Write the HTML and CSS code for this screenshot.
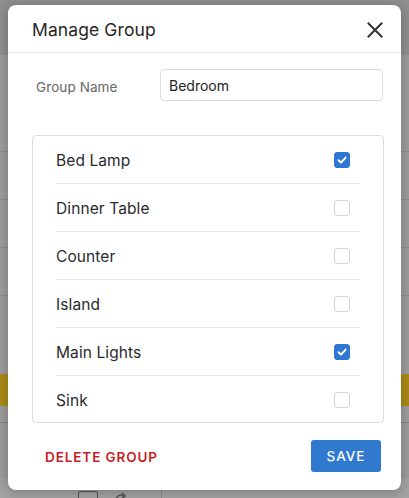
FILE: index.html
```html
<!DOCTYPE html>
<html>
<head>
<meta charset="utf-8">
<title>Manage Group</title>
<link rel="stylesheet" href="styles.css">
</head>
<body>
<div class="page">
  <div class="bg-header"></div>
  <div class="bg-row bg-tall"></div>
  <div class="bg-row"></div>
  <div class="bg-row"></div>
  <div class="bg-row"></div>
  <div class="bg-row bg-mid"></div>
  <div class="bg-yellow"></div>
  <div class="bg-row bg-short"></div>
  <div class="bg-row bg-gap"></div>
  <div class="bg-toolbar">
    <span class="tb-icon tb-kbd"></span>
    <svg class="tb-icon" width="18" height="18" viewBox="0 0 18 18"><path d="M14 9a5 5 0 1 1-2-4" fill="none" stroke="#555" stroke-width="1.6"/><path d="M10 2l3 3-3 2" fill="none" stroke="#555" stroke-width="1.6"/></svg>
    <span class="tb-divider"></span>
  </div>
</div>

<div class="modal">
  <div class="modal-header">
    <h2 class="modal-title">Manage Group</h2>
    <svg class="close" width="16" height="16" viewBox="0 0 16 16"><path d="M1.5 1.5L14.5 14.5M14.5 1.5L1.5 14.5" stroke="#333" stroke-width="2" stroke-linecap="square"/></svg>
  </div>
  <div class="modal-body">
    <div class="field">
      <label class="field-label">Group Name</label>
      <div class="field-input">Bedroom</div>
    </div>
    <div class="list">
      <div class="item"><span>Bed Lamp</span><span class="cb on"><svg width="16" height="16" viewBox="0 0 16 16"><path d="M4.5 8.3L7 10.6L11.6 5.6" fill="none" stroke="#fff" stroke-width="2" stroke-linecap="round" stroke-linejoin="round"/></svg></span></div>
      <div class="item"><span>Dinner Table</span><span class="cb"></span></div>
      <div class="item"><span>Counter</span><span class="cb"></span></div>
      <div class="item"><span>Island</span><span class="cb"></span></div>
      <div class="item"><span>Main Lights</span><span class="cb on"><svg width="16" height="16" viewBox="0 0 16 16"><path d="M4.5 8.3L7 10.6L11.6 5.6" fill="none" stroke="#fff" stroke-width="2" stroke-linecap="round" stroke-linejoin="round"/></svg></span></div>
      <div class="item"><span>Sink</span><span class="cb"></span></div>
    </div>
  </div>
  <div class="modal-footer">
    <button class="btn-delete">DELETE GROUP</button>
    <button class="btn-save">SAVE</button>
  </div>
</div>
</body>
</html>
```

FILE: styles.css
```css
* { box-sizing: border-box; }
html, body { margin: 0; padding: 0; }
body {
  width: 409px;
  height: 498px;
  overflow: hidden;
  position: relative;
  font-family: Inter, "Liberation Sans", sans-serif;
  background: #9c9c9c;
}

.page { display: flex; flex-direction: column; height: 498px; }
.bg-header { height: 55px; background: #8e8e8e; flex: none; }
.bg-row { height: 48px; border-bottom: 1px solid #8a8a8a; flex: none; }
.bg-tall { height: 97px; }
.bg-mid { height: 78px; border-bottom: none; }
.bg-yellow { height: 32px; background: #a98a18; flex: none; }
.bg-short { height: 17px; border-bottom: 1px solid #808080; }
.bg-gap { height: 55px; border-bottom: none; }
.bg-toolbar {
  flex: 1;
  background: #a2a2a2;
  display: flex;
  align-items: flex-start;
  padding: 13px 0 0 78px;
  gap: 14px;
}
.tb-icon { flex: none; }
.tb-kbd { width: 20px; height: 14px; border: 1.6px solid #555; border-radius: 2px; }
.tb-divider { width: 1px; height: 30px; background: #888; margin-left: 17px; margin-top: -13px; }

.modal {
  position: absolute;
  left: 8px;
  top: 5px;
  width: 393px;
  height: 485px;
  background: #fff;
  border-radius: 8px;
  box-shadow: 0 2px 12px rgba(0,0,0,0.25);
  display: flex;
  flex-direction: column;
}

.modal-header {
  height: 48px;
  border-bottom: 1px solid #e6e6e6;
  display: flex;
  align-items: center;
  justify-content: space-between;
  padding: 0 18px 0 24px;
  flex: none;
}
.modal-title {
  margin: 0;
  font-size: 17.5px;
  font-weight: 400;
  color: #262626;
  letter-spacing: 0.1px;
  padding-top: 2px;
}
.close { display: block; margin-top: 2px; }

.modal-body {
  padding: 16px 17px 0 24px;
  flex: none;
}
.field { display: flex; align-items: center; }
.field-label {
  width: 128px;
  padding-left: 4px;
  font-size: 13.5px;
  color: #666;
  padding-top: 3px;
  letter-spacing: 0.1px;
}
.field-input {
  flex: 1;
  height: 32px;
  border: 1px solid #dcdcdc;
  border-radius: 4px;
  padding: 0 8px;
  display: flex;
  align-items: center;
  font-size: 14px;
  color: #222;
  margin-right: 1px;
}

.list {
  margin-top: 34px;
  height: 288px;
  border: 1px solid #dddddd;
  border-radius: 4px;
  padding: 0 23px;
  overflow: hidden;
}
.item {
  height: 48px;
  border-bottom: 1px solid #e8e8e8;
  display: flex;
  align-items: center;
  justify-content: space-between;
  padding-right: 10px;
  font-size: 15.5px;
  color: #2a2a2a;
  letter-spacing: 0.1px;
}
.item span:first-child { padding-top: 1px; }
.cb {
  width: 16px;
  height: 16px;
  border: 1px solid #d4d4d4;
  border-radius: 3px;
  background: #fff;
  display: block;
}
.cb.on { background: #2f76d2; border-color: #2f76d2; }
.cb svg { display: block; margin: -1px; }

.modal-footer {
  flex: 1;
  display: flex;
  align-items: center;
  justify-content: space-between;
  padding: 0 20px 2px 37px;
}
.btn-delete {
  border: none;
  background: none;
  font-family: inherit;
  font-size: 13.5px;
  font-weight: 600;
  letter-spacing: 0.9px;
  color: #c81e2a;
  padding: 0;
  margin-top: 2px;
}
.btn-save {
  border: none;
  width: 70px;
  height: 32px;
  border-radius: 3px;
  background: #3179cf;
  color: #fff;
  font-family: inherit;
  font-size: 13.5px;
  font-weight: 500;
  letter-spacing: 1px;
  padding: 0;
}
```
